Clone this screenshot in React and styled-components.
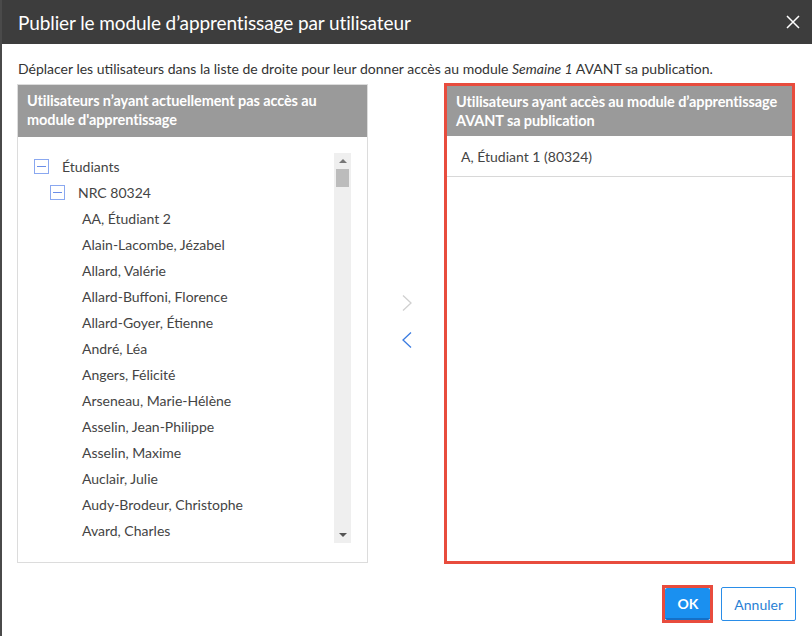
import React from "react";
import styled, { createGlobalStyle } from "styled-components";

const GlobalStyle = createGlobalStyle`
  html, body {
    margin: 0;
    padding: 0;
    background: #4a4a4a;
    font-family: Lato, "Open Sans", sans-serif;
  }
  * { box-sizing: border-box; }
`;

//Dialog frame
const Dialog = styled.div`
  margin-left: 2px;
  width: 810px;
  height: 636px;
  background: #fff;
  display: flex;
  flex-direction: column;
`;

const Header = styled.div`
  height: 44px;
  background: #3d3d3d;
  color: #fff;
  display: flex;
  align-items: center;
  justify-content: space-between;
  padding: 0 12px 0 16px;
`;

const Title = styled.h1`
  margin: 0;
  font-size: 19px;
  font-weight: 400;
  letter-spacing: -0.1px;
`;

const Close = styled.button`
  background: none;
  border: none;
  color: #fff;
  padding: 0;
  cursor: pointer;
  display: flex;
`;

const Body = styled.div`
  padding: 16px 16px 0 15px;
  flex: 1;
  display: flex;
  flex-direction: column;
`;

const Intro = styled.p`
  margin: 0 0 7px 1px;
  font-size: 14px;
  color: #333;
  em { font-style: italic; }
`;

const Columns = styled.div`
  display: flex;
  align-items: flex-start;
`;

//Panels
const Panel = styled.div`
  width: 351px;
  height: ${(p) => (p.$highlight ? "481px" : "479px")};
  border: ${(p) => (p.$highlight ? "3px solid #e84c3d" : "1px solid #dcdcdc")};
  margin-top: ${(p) => (p.$highlight ? "-1px" : "0")};
  display: flex;
  flex-direction: column;
  background: #fff;
`;

const PanelHead = styled.div`
  background: #9a9a9a;
  color: #fff;
  font-weight: 700;
  font-size: 14.5px;
  line-height: 19px;
  padding: 6px 8px 8px 9px;
  height: ${(p) => (p.$highlight ? "50px" : "52px")};
  letter-spacing: -0.1px;
  white-space: nowrap;
`;

const TreeArea = styled.div`
  flex: 1;
  display: flex;
  padding: 16px 16px 20px 16px;
`;

const TreeList = styled.div`
  flex: 1;
`;

const Row = styled.div`
  display: flex;
  align-items: center;
  height: 26px;
  padding-left: ${(p) => p.$indent}px;
  font-size: 14px;
  color: #444;
`;

const Toggle = styled.span`
  width: 15px;
  height: 15px;
  border: 1px solid #8aa8f0;
  display: inline-flex;
  align-items: center;
  justify-content: center;
  margin-right: ${(p) => p.$gap}px;
  &::after {
    content: "";
    width: 9px;
    height: 1px;
    background: #6b8ee8;
  }
`;

const Scrollbar = styled.div`
  width: 17px;
  background: #efefef;
  display: flex;
  flex-direction: column;
  align-items: center;
  padding-top: 6px;
  position: relative;
`;

const ArrowUp = styled.span`
  width: 0;
  height: 0;
  border-left: 4px solid transparent;
  border-right: 4px solid transparent;
  border-bottom: 4px solid #777;
`;

const ArrowDown = styled.span`
  position: absolute;
  bottom: 6px;
  width: 0;
  height: 0;
  border-left: 4px solid transparent;
  border-right: 4px solid transparent;
  border-top: 4px solid #555;
`;

const Thumb = styled.div`
  width: 13px;
  height: 18px;
  background: #bcbcbc;
  margin-top: 6px;
`;

//Middle transfer buttons
const Transfer = styled.div`
  width: 78px;
  display: flex;
  flex-direction: column;
  align-items: center;
  padding-top: 210px;
  gap: 19px;
  margin-right: -2px;
`;

const TransferBtn = styled.button`
  background: none;
  border: none;
  padding: 0;
  display: flex;
  color: ${(p) => (p.$active ? "#3a7be0" : "#d0d0d0")};
`;

const SelectedItem = styled.div`
  font-size: 14px;
  color: #444;
  padding: 12px 14px 10px 14px;
  height: 41px;
  border-bottom: 1px solid #d8d8d8;
`;

//Footer
const Footer = styled.div`
  display: flex;
  justify-content: flex-end;
  align-items: center;
  gap: 8px;
  padding: 21px 0 0 0;
`;

const OkWrap = styled.div`
  border: 3px solid #e84c3d;
  padding: 0;
`;

const Button = styled.button`
  font-family: inherit;
  font-size: 14px;
  height: ${(p) => (p.$primary ? "32px" : "34px")};
  padding: 0 12px;
  border-radius: 2px;
  border: ${(p) => (p.$primary ? "none" : "1px solid #2a8de8")};
  border-bottom: ${(p) => (p.$primary ? "2px solid #1470c8" : "1px solid #2a8de8")};
  background: ${(p) => (p.$primary ? "#1a90f0" : "#fff")};
  color: ${(p) => (p.$primary ? "#fff" : "#2a7fd4")};
  font-weight: ${(p) => (p.$primary ? 700 : 400)};
  cursor: pointer;
`;

const students = [
  "AA, Étudiant 2",
  "Alain-Lacombe, Jézabel",
  "Allard, Valérie",
  "Allard-Buffoni, Florence",
  "Allard-Goyer, Étienne",
  "André, Léa",
  "Angers, Félicité",
  "Arseneau, Marie-Hélène",
  "Asselin, Jean-Philippe",
  "Asselin, Maxime",
  "Auclair, Julie",
  "Audy-Brodeur, Christophe",
  "Avard, Charles",
];

function Chevron({ dir }) {
  return (
    <svg width="14" height="18" viewBox="0 0 14 18" fill="none" stroke="currentColor" strokeWidth="1.3">
      {dir === "right" ? <path d="M3 1.5 L11 9 L3 16.5" /> : <path d="M11 1.5 L3 9 L11 16.5" />}
    </svg>
  );
}

export default function App() {
  return (
    <>
      <GlobalStyle />
      <Dialog>
        <Header>
          <Title>Publier le module d’apprentissage par utilisateur</Title>
          <Close aria-label="Fermer">
            <svg width="14" height="14" viewBox="0 0 14 14" stroke="#fff" strokeWidth="1.5">
              <path d="M1 1 L13 13 M13 1 L1 13" />
            </svg>
          </Close>
        </Header>
        <Body>
          <Intro>
            Déplacer les utilisateurs dans la liste de droite pour leur donner accès au module <em>Semaine 1</em> AVANT sa publication.
          </Intro>
          <Columns>
            <Panel>
              <PanelHead>
                Utilisateurs n’ayant actuellement pas accès au
                <br />
                module d'apprentissage
              </PanelHead>
              <TreeArea>
                <TreeList>
                  <Row $indent={0}>
                    <Toggle $gap={13} />
                    Étudiants
                  </Row>
                  <Row $indent={16}>
                    <Toggle $gap={13} />
                    NRC 80324
                  </Row>
                  {students.map((s) => (
                    <Row key={s} $indent={48}>
                      {s}
                    </Row>
                  ))}
                </TreeList>
                <Scrollbar>
                  <ArrowUp />
                  <Thumb />
                  <ArrowDown />
                </Scrollbar>
              </TreeArea>
            </Panel>
            <Transfer>
              <TransferBtn aria-label="Ajouter">
                <Chevron dir="right" />
              </TransferBtn>
              <TransferBtn $active aria-label="Retirer">
                <Chevron dir="left" />
              </TransferBtn>
            </Transfer>
            <Panel $highlight>
              <PanelHead $highlight>
                Utilisateurs ayant accès au module d’apprentissage
                <br />
                AVANT sa publication
              </PanelHead>
              <SelectedItem>A, Étudiant 1 (80324)</SelectedItem>
            </Panel>
          </Columns>
          <Footer>
            <OkWrap>
              <Button $primary>OK</Button>
            </OkWrap>
            <Button>Annuler</Button>
          </Footer>
        </Body>
      </Dialog>
    </>
  );
}
